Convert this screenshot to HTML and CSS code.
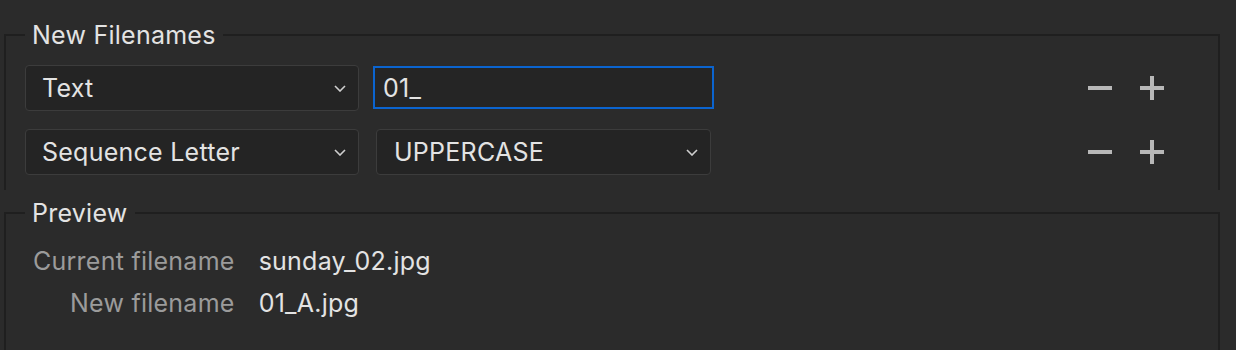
FILE: index.html
```html
<!DOCTYPE html>
<html lang="en">

<head>
    <meta charset="UTF-8">
    <meta name="viewport" content="width=device-width, initial-scale=1.0">
    <title>Rename Files</title>
    <link rel="stylesheet" href="styles.css">
</head>

<body>
    <!-- 新しいファイル名のルール -->
    <fieldset class="group group-rules">
        <legend>New Filenames</legend>

        <div class="rule-row">
            <div class="dropdown">
                <span>Text</span>
                <svg class="chevron" viewBox="0 0 12 7"><path d="M1 1l5 5 5-5" /></svg>
            </div>
            <div class="second-col">
                <input type="text" class="text-field" value="01_">
            </div>
            <div class="row-buttons">
                <span class="btn-minus"></span>
                <span class="btn-plus"></span>
            </div>
        </div>

        <div class="rule-row">
            <div class="dropdown">
                <span>Sequence Letter</span>
                <svg class="chevron" viewBox="0 0 12 7"><path d="M1 1l5 5 5-5" /></svg>
            </div>
            <div class="second-col">
                <div class="dropdown dropdown-inner">
                    <span>UPPERCASE</span>
                    <svg class="chevron" viewBox="0 0 12 7"><path d="M1 1l5 5 5-5" /></svg>
                </div>
            </div>
            <div class="row-buttons">
                <span class="btn-minus"></span>
                <span class="btn-plus"></span>
            </div>
        </div>
    </fieldset>

    <!-- プレビュー -->
    <fieldset class="group group-preview">
        <legend>Preview</legend>
        <div class="preview-grid">
            <span class="preview-label">Current filename</span>
            <span class="preview-value">sunday_02.jpg</span>
            <span class="preview-label">New filename</span>
            <span class="preview-value">01_A.jpg</span>
        </div>
    </fieldset>
</body>

</html>
```

FILE: styles.css
```css
body,
html {
    margin: 0;
    padding: 0;
    overflow: hidden;
    width: 100%;
    height: 100%;
}

body {
    background-color: #2b2b2b;
    color: #e3e3e3;
    font-family: Inter, "Noto Sans", sans-serif;
    font-size: 25px;
    letter-spacing: 0.25px;
}

.group {
    margin: 20px 16px 0 4px;
    padding: 0 19px 15px 19px;
    border: 2px solid #1f1f1f;
    border-bottom: none;
    min-width: 0;
}

.group legend {
    padding: 0 7px;
    line-height: 30px;
    color: #e3e3e3;
}

.group-rules {
    padding-top: 15px;
}

.group-preview {
    margin-top: 8px;
    padding-top: 12px;
    padding-bottom: 40px;
}

/* ルール行 */
.rule-row {
    display: flex;
    align-items: center;
    height: 46px;
}

.rule-row + .rule-row {
    margin-top: 18px;
}

.dropdown {
    display: flex;
    align-items: center;
    justify-content: space-between;
    box-sizing: border-box;
    width: 334px;
    height: 46px;
    padding: 0 12px 0 16px;
    background-color: #242424;
    border: 1px solid #3c3c3c;
    border-radius: 4px;
}

.chevron {
    width: 12px;
    height: 7px;
    fill: none;
    stroke: #cfcfcf;
    stroke-width: 1.6;
}

.second-col {
    width: 341px;
    margin-left: 14px;
}

.dropdown-inner {
    width: 335px;
    margin: 0 3px;
    padding-left: 17px;
}

.text-field {
    display: block;
    box-sizing: border-box;
    width: 341px;
    height: 43px;
    margin-top: -1px;
    padding: 0 8px;
    background-color: #252525;
    border: 2px solid #0b64cf;
    color: #e3e3e3;
    font-family: inherit;
    font-size: 25px;
    letter-spacing: inherit;
    outline: none;
}

/* ＋／－ボタン */
.row-buttons {
    display: flex;
    align-items: center;
    gap: 28px;
    margin-left: auto;
    margin-right: 35px;
}

.btn-minus,
.btn-plus {
    position: relative;
    width: 24px;
    height: 24px;
}

.btn-minus::before,
.btn-plus::before,
.btn-plus::after {
    content: "";
    position: absolute;
    background-color: #b8b8b8;
}

.btn-minus::before,
.btn-plus::before {
    left: 0;
    top: 10px;
    width: 24px;
    height: 4px;
}

.btn-plus::after {
    left: 10px;
    top: 0;
    width: 4px;
    height: 24px;
}

/* プレビュー */
.preview-grid {
    display: grid;
    grid-template-columns: auto auto;
    justify-content: start;
    column-gap: 24px;
    padding-left: 8px;
    line-height: 42px;
}

.preview-label {
    text-align: right;
    color: #9b9b9b;
}

.preview-value {
    color: #e3e3e3;
}
```
